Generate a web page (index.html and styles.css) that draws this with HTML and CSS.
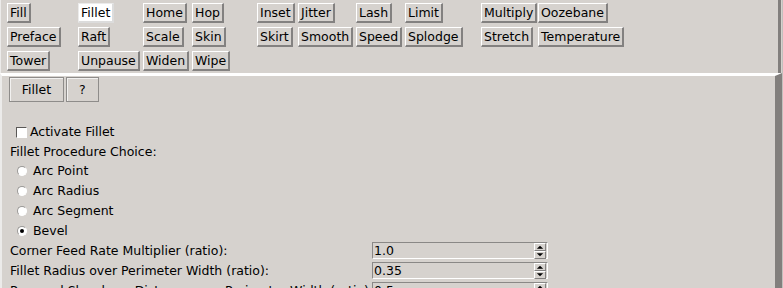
FILE: index.html
```html
<!DOCTYPE html>
<html>
<head>
<meta charset="utf-8">
<link rel="stylesheet" href="styles.css">
</head>
<body>
<div class="app">
  <div class="top">
    <div class="tools">
      <span class="tb">Fill</span><span class="tb sel">Fillet</span><span class="tb">Home</span><span class="tb">Hop</span><span class="tb">Inset</span><span class="tb">Jitter</span><span class="tb">Lash</span><span class="tb">Limit</span><span class="tb">Multiply</span><span class="tb">Oozebane</span>
      <span class="tb">Preface</span><span class="tb">Raft</span><span class="tb">Scale</span><span class="tb">Skin</span><span class="tb">Skirt</span><span class="tb">Smooth</span><span class="tb">Speed</span><span class="tb">Splodge</span><span class="tb">Stretch</span><span class="tb">Temperature</span>
      <span class="tb">Tower</span><span class="tb">Unpause</span><span class="tb">Widen</span><span class="tb">Wipe</span>
    </div>
  </div>
  <div class="lower">
    <div class="tabs">
      <span class="tab">Fillet</span><span class="tab">?</span>
    </div>
    <div class="form">
      <div class="check-row"><span class="checkbox"></span><span>Activate Fillet</span></div>
      <div class="choice-title">Fillet Procedure Choice:</div>
      <div class="radio-row"><span class="radio"></span><span>Arc Point</span></div>
      <div class="radio-row"><span class="radio"></span><span>Arc Radius</span></div>
      <div class="radio-row"><span class="radio"></span><span>Arc Segment</span></div>
      <div class="radio-row"><span class="radio on"></span><span>Bevel</span></div>
      <div class="field-row">
        <span>Corner Feed Rate Multiplier (ratio):</span>
        <span class="spin"><span class="spin-val">1.0</span><span class="arrows"><span class="arr"><svg width="11" height="6" viewBox="0 0 11 6"><polygon points="2,5 5.5,1.5 9,5" fill="#000"/></svg></span><span class="arr"><svg width="11" height="6" viewBox="0 0 11 6"><polygon points="2,1 5.5,4.5 9,1" fill="#000"/></svg></span></span></span>
      </div>
      <div class="field-row">
        <span>Fillet Radius over Perimeter Width (ratio):</span>
        <span class="spin"><span class="spin-val">0.35</span><span class="arrows"><span class="arr"><svg width="11" height="6" viewBox="0 0 11 6"><polygon points="2,5 5.5,1.5 9,5" fill="#000"/></svg></span><span class="arr"><svg width="11" height="6" viewBox="0 0 11 6"><polygon points="2,1 5.5,4.5 9,1" fill="#000"/></svg></span></span></span>
      </div>
      <div class="field-row">
        <span>Reversal Slowdown Distance over Perimeter Width (ratio):</span>
        <span class="spin"><span class="spin-val">0.5</span><span class="arrows"><span class="arr"><svg width="11" height="6" viewBox="0 0 11 6"><polygon points="2,5 5.5,1.5 9,5" fill="#000"/></svg></span><span class="arr"><svg width="11" height="6" viewBox="0 0 11 6"><polygon points="2,1 5.5,4.5 9,1" fill="#000"/></svg></span></span></span>
      </div>
    </div>
  </div>
</div>
</body>
</html>
```

FILE: styles.css
```css
* { box-sizing: border-box; }
html, body { margin: 0; padding: 0; background: #d6d2ce; }
.app {
  width: 783px;
  height: 288px;
  overflow: hidden;
  background: #d6d2ce;
  border-right: 1px solid #c2c0bd;
  font-family: "DejaVu Sans", "Liberation Sans", sans-serif;
  font-size: 12.5px;
  color: #000;
}
.top {
  height: 73px;
  margin-right: 1px;
  border-left: 1px solid #ecebea;
  border-right: 3px solid #827f7d;
}
.tools {
  display: grid;
  grid-template-columns: 71px 65px 49px 65px 41px 58px 49px 76px 57px auto;
  grid-auto-rows: 20px;
  row-gap: 4px;
  padding: 3px 0 0 6px;
  justify-items: start;
}
.tb {
  display: block;
  height: 20px;
  line-height: 14px;
  padding: 2px 2px 1px 2px;
  border-style: solid;
  border-width: 1px 2px 2px 1px;
  border-color: #ffffff #838180 #838180 #ffffff;
  white-space: nowrap;
}
.tb.sel {
  background: #ffffff;
  border-color: #ebebeb #dcdcdc #dcdcdc #ebebeb;
}
.lower {
  height: 215px;
  border-top: 3px solid #ffffff;
  border-left: 2px solid #ecebea;
  border-right: 7px solid #827f7d;
  padding-left: 8px;
}
.tabs {
  display: flex;
  gap: 2px;
  margin-top: 1px;
  margin-left: -1px;
}
.tab {
  display: block;
  height: 25px;
  line-height: 14px;
  padding: 5px 12px 4px 12px;
  border: 1px solid #8e8c8a;
  box-shadow: inset 1px 1px 0 #f2f1f0;
  text-align: center;
  min-width: 32px;
}
.tab:first-child { width: 55px; padding: 5px 0 4px 0; }
.form {
  margin-top: 20px;
}
.check-row, .radio-row {
  display: flex;
  align-items: center;
  height: 20px;
  line-height: 20px;
}
.checkbox {
  width: 11px;
  height: 11px;
  margin-left: 6px;
  margin-right: 3px;
  background: #ffffff;
  border-style: solid;
  border-width: 1px;
  border-color: #5a5856 #ffffff #ffffff #5a5856;
}
.choice-title {
  height: 19px;
  line-height: 19px;
}
.radio {
  width: 10px;
  height: 10px;
  margin-left: 7px;
  margin-right: 6px;
  border-radius: 50%;
  background: #ffffff;
  border: 1px solid;
  border-color: #9a9896 #ffffff #ffffff #9a9896;
  display: flex;
  align-items: center;
  justify-content: center;
}
.radio.on::after {
  content: "";
  width: 4px;
  height: 4px;
  border-radius: 50%;
  background: #000;
}
.field-row {
  display: grid;
  grid-template-columns: 362px 176px;
  height: 20px;
  line-height: 20px;
  white-space: nowrap;
}
.spin {
  display: flex;
  height: 17px;
  margin-top: 1px;
  border: 1px solid;
  border-color: #8a8886 #ffffff #ffffff #8a8886;
}
.spin-val {
  flex: 1;
  line-height: 13px;
  padding: 1px 0 0 1px;
}
.arrows {
  display: flex;
  flex-direction: column;
  width: 12px;
  margin: 0 1px 0 0;
}
.arr {
  flex: 1;
  display: flex;
  align-items: center;
  justify-content: center;
  border-style: solid;
  border-width: 1px;
  border-color: #ffffff #838180 #838180 #ffffff;
}
.arr svg { display: block; }
```
